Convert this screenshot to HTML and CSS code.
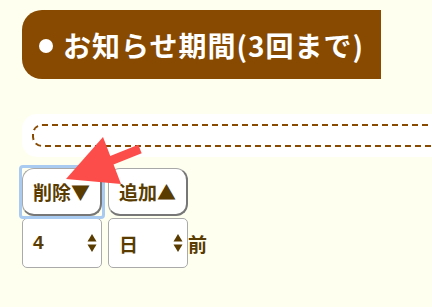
FILE: index.html
```html
<!DOCTYPE html>
<html lang="ja">
<head>
    <meta charset="UTF-8">
    <meta name="viewport" content="width=device-width, initial-scale=1.0">
    <title>お知らせ期間</title>
    <link rel="stylesheet" href="styles.css">
</head>
<body>
    <div class="page">
        <h2 class="title"><span class="dot"></span>お知らせ期間(3回まで)</h2>

        <div class="band">
            <div class="dashed"></div>
        </div>

        <div class="buttons">
            <button class="btn focused">削除▼</button>
            <button class="btn">追加▲</button>
        </div>

        <div class="selects">
            <div class="select">
                <span>4</span>
                <svg class="updown" width="10" height="20" viewBox="0 0 10 20">
                    <polygon points="5,1 9.5,8.5 0.5,8.5" />
                    <polygon points="0.5,11.5 9.5,11.5 5,19" />
                </svg>
            </div>
            <div class="select">
                <span>日</span>
                <svg class="updown" width="10" height="20" viewBox="0 0 10 20">
                    <polygon points="5,1 9.5,8.5 0.5,8.5" />
                    <polygon points="0.5,11.5 9.5,11.5 5,19" />
                </svg>
            </div>
            <span class="before">前</span>
        </div>
    </div>

    <!-- red pointer arrow drawn over the buttons -->
    <svg class="pointer" width="432" height="307" viewBox="0 0 432 307">
        <line x1="110" y1="161" x2="140" y2="149" stroke="#fd4d4a" stroke-width="9" />
        <polygon points="103,137 66,179 121,184" fill="#fd4d4a" />
    </svg>
</body>
</html>
```

FILE: styles.css
```css
body {
    margin: 0;
    background: #fffff0;
    font-family: "Noto Sans CJK JP", "Liberation Sans", sans-serif;
    overflow: hidden;
    color: #5a3c00;
}

.page {
    padding: 10px 0 0 22px;
}

.title {
    margin: 0;
    display: flex;
    align-items: center;
    box-sizing: border-box;
    width: 359px;
    height: 69px;
    padding-left: 17px;
    background: #874a00;
    border-radius: 20px 0 0 20px;
    color: white;
    font-size: 28px;
    font-weight: bold;
    letter-spacing: 1px;
}

.dot {
    width: 14px;
    height: 14px;
    border-radius: 50%;
    background: white;
    margin-right: 10px;
    margin-top: 2px;
}

.band {
    margin-top: 35px;
    height: 43px;
    box-sizing: border-box;
    padding: 10px 0 10px 10px;
    background: white;
    border-radius: 15px 0 0 15px;
    overflow: hidden;
}

.dashed {
    width: calc(100% + 10px);
    height: 23px;
    box-sizing: border-box;
    border: 2px dashed #874a00;
    border-radius: 10px 0 0 10px;
}

.buttons {
    margin-top: 11px;
    display: flex;
    gap: 6px;
}

.btn {
    position: relative;
    width: 80px;
    height: 48px;
    padding: 0;
    background: white;
    border-style: solid;
    border-width: 1px 2px 2px 1px;
    border-color: #a8a8a8 #777 #777 #a8a8a8;
    border-radius: 12px;
    font-family: "Noto Sans CJK JP", sans-serif;
    font-size: 19px;
    font-weight: bold;
    color: #5a3c00;
}

.btn.focused::after {
    content: "";
    position: absolute;
    top: -4px;
    left: -4px;
    right: -5px;
    bottom: -5px;
    border: 3px solid #a9cbf1;
    border-radius: 4px;
}

.selects {
    margin-top: 2px;
    display: flex;
    align-items: center;
    gap: 6px;
}

.select {
    width: 80px;
    height: 50px;
    box-sizing: border-box;
    display: flex;
    align-items: center;
    justify-content: space-between;
    padding: 0 4px 0 10px;
    background: white;
    border: 1px solid #aaa;
    border-radius: 5px;
    font-family: "Liberation Sans", "Noto Sans CJK JP", sans-serif;
    font-size: 19px;
    font-weight: bold;
}

.updown {
    fill: #5a3c00;
}

.before {
    margin-left: -6px;
    font-size: 19px;
    font-weight: bold;
}

.pointer {
    position: absolute;
    top: 0;
    left: 0;
    pointer-events: none;
}
```
